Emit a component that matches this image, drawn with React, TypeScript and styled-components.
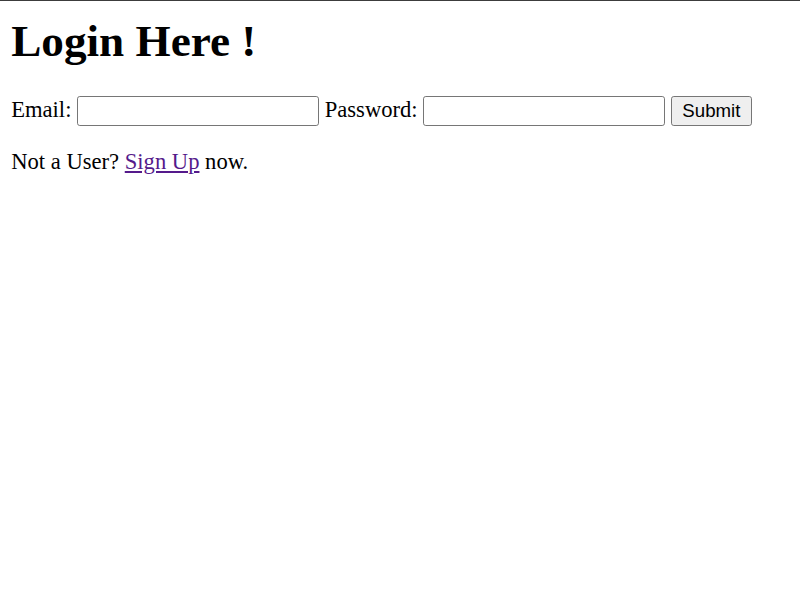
import React from "react";
import styled, { createGlobalStyle } from "styled-components";

const Global = createGlobalStyle`
  html {
    border-top: 1px solid #3c3c3c;
    background: #fff;
  }
  body {
    margin: 11.2px;
    font-family: "Liberation Serif", "Times New Roman", serif;
    font-size: 22.6px;
    color: #000;
  }
`;

const Title = styled.h1`
  font-size: 45.2px;
  font-weight: bold;
  margin: 2.5px 0 29px;
`;

const Form = styled.form`
  margin: 0;
`;

const Field = styled.input`
  box-sizing: border-box;
  width: 242px;
  height: 30px;
  padding: 1.4px 2.8px;
  border: 1.4px solid #767676;
  border-radius: 2.8px;
  font-family: "Liberation Sans", Arial, sans-serif;
  font-size: 18.67px;
  background: #fff;
  vertical-align: baseline;
`;

const SubmitButton = styled.button`
  box-sizing: border-box;
  height: 30px;
  padding: 1.4px 10.4px;
  border: 1.4px solid #767676;
  border-radius: 2.8px;
  background: #efefef;
  color: #000;
  font-family: "Liberation Sans", Arial, sans-serif;
  font-size: 18.67px;
`;

const Note = styled.p`
  margin: 23.4px 0;
`;

const Link = styled.a`
  color: #551a8b;
  text-decoration: underline;
`;

export default function App() {
  return (
    <>
      <Global />
      <Title>Login Here !</Title>
      <Form onSubmit={(e) => e.preventDefault()}>
        Email: <Field type="email" /> Password: <Field type="password" />{" "}
        <SubmitButton type="submit">Submit</SubmitButton>
      </Form>
      <Note>
        Not a User? <Link href="#">Sign Up</Link> now.
      </Note>
    </>
  );
}
